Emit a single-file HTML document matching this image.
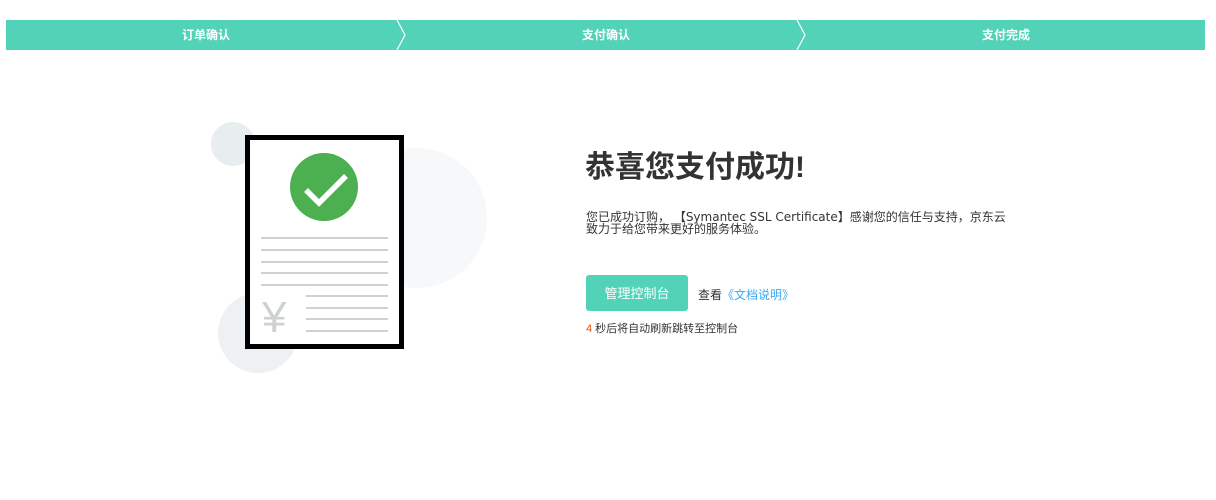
<!DOCTYPE html>
<html><head><meta charset="utf-8"><style>
body{margin:0;width:1216px;height:500px;background:#fff;font-family:"Liberation Sans","Noto Sans CJK SC",sans-serif;position:relative;overflow:hidden}
.bar{position:absolute;left:6px;top:20px;width:1199px;height:30px;background:#52d3b7}
.step{position:absolute;top:20px;height:30px;line-height:30px;color:#fff;font-size:12px;font-weight:bold;text-align:center;width:400px}
.abs{position:absolute}
</style></head><body>
<div class="bar"></div>
<svg class="abs" style="left:0;top:20px" width="1216" height="30"><polyline points="397,0 405,15 397,30" fill="none" stroke="#fff" stroke-width="1.2"/><polyline points="797,0 805,15 797,30" fill="none" stroke="#fff" stroke-width="1.2"/></svg>
<div class="step" style="left:6px">订单确认</div>
<div class="step" style="left:406px">支付确认</div>
<div class="step" style="left:806px">支付完成</div>
<svg class="abs" style="left:0;top:0" width="600" height="400">
<circle cx="233" cy="144" r="22" fill="#e8edf0"/>
<circle cx="417" cy="218" r="70" fill="#f6f8fa"/>
<circle cx="258" cy="333" r="40" fill="#edf1f4"/>
<rect x="247.5" y="137.5" width="154" height="209" fill="#fff" stroke="#000" stroke-width="5"/>
<circle cx="324" cy="187" r="34" fill="#4caf50"/>
<polyline points="306,190 319,203 346,176" fill="none" stroke="#fff" stroke-width="5.5"/>
<g stroke="#cdd1d4" stroke-width="2">
<line x1="261" y1="238" x2="388" y2="238"/><line x1="261" y1="250" x2="388" y2="250"/><line x1="261" y1="262" x2="388" y2="262"/><line x1="261" y1="273" x2="388" y2="273"/><line x1="261" y1="285" x2="388" y2="285"/>
<line x1="306" y1="296" x2="388" y2="296"/><line x1="306" y1="308" x2="388" y2="308"/><line x1="306" y1="319" x2="388" y2="319"/><line x1="306" y1="331" x2="388" y2="331"/>
</g>
<text x="262" y="332" font-size="44" fill="#cdd1d4" font-family="Liberation Sans,sans-serif">¥</text>
</svg>
<div class="abs" style="left:585px;top:149px;font-size:30px;font-weight:bold;color:#333;line-height:38px">恭喜您支付成功!</div>
<div class="abs" style="left:586px;top:211px;font-size:12px;color:#333;line-height:12px;width:460px;font-family:'DejaVu Sans','Noto Sans CJK SC',sans-serif;white-space:nowrap">您已成功订购， 【Symantec SSL Certificate】感谢您的信任与支持，京东云<br>致力于给您带来更好的服务体验。</div>
<div class="abs" style="left:586px;top:275px;width:102px;height:36px;background:#52d3b7;border-radius:3px;color:#fff;font-size:13px;line-height:37px;text-align:center">管理控制台</div>
<div class="abs" style="left:698px;top:286px;font-size:12px;color:#333">查看<span style="color:#3da8f5">《文档说明》</span></div>
<div class="abs" style="left:586px;top:320px;font-size:11px;color:#333"><span style="color:#f04a00">4</span> 秒后将自动刷新跳转至控制台</div>
</body></html>
